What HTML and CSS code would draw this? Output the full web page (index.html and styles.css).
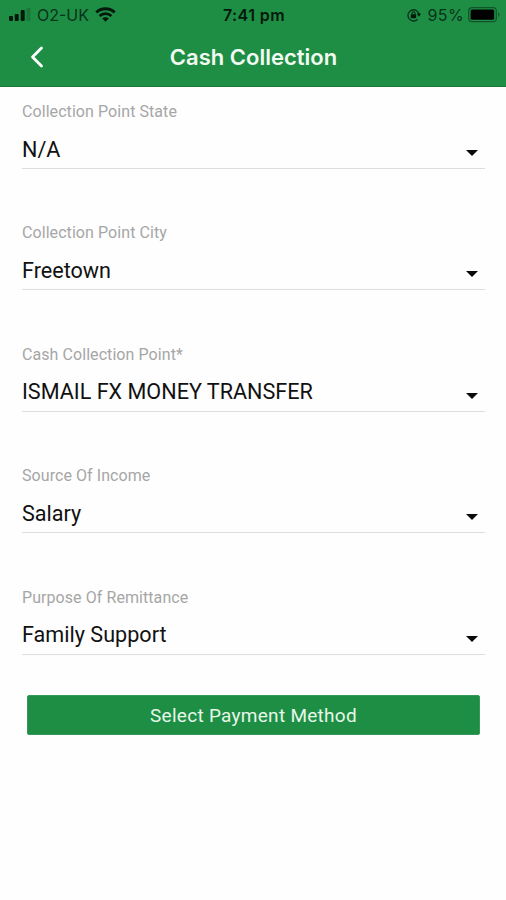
FILE: index.html
```html
<!DOCTYPE html>
<html lang="en">
<head>
    <meta charset="UTF-8">
    <meta name="viewport" content="width=device-width, initial-scale=1.0">
    <title>Cash Collection</title>
    <link rel="stylesheet" href="styles.css">
</head>
<body>
    <header class="header">
        <div class="status">
            <div class="status-left">
                <svg class="signal" width="22" height="13" viewBox="0 0 22 13">
                    <rect x="0" y="8" width="4" height="5" rx="1"/>
                    <rect x="5.7" y="6" width="4" height="7" rx="1"/>
                    <rect x="11.7" y="2" width="4" height="11" rx="1"/>
                    <rect x="17.5" y="0" width="4" height="13" rx="1" opacity="0.18"/>
                </svg>
                <span class="carrier">O2-UK</span>
                <svg class="wifi" width="21" height="15" viewBox="0 0 21 15">
                    <path d="M1.3 5.4C6.5 .6 14.5 .6 19.7 5.4" fill="none" stroke="#04180b" stroke-width="2.9"/>
                    <path d="M4.6 9C8 5.8 13 5.8 16.4 9" fill="none" stroke="#04180b" stroke-width="2.7"/>
                    <path d="M7.2 11.6C9.2 9.8 11.8 9.8 13.8 11.6L10.5 14.8Z"/>
                </svg>
            </div>
            <span class="time">7:41 pm</span>
            <div class="status-right">
                <svg class="lock" width="14" height="14" viewBox="0 0 14 14">
                    <path d="M10.6 11.3A5.6 5.6 0 1 1 12 6" fill="none" stroke="#07321a" stroke-width="1.3"/>
                    <path d="M9.8 5.5H14L12 8.8Z"/>
                    <rect x="3.8" y="6.3" width="5.4" height="3.9" rx=".6"/>
                    <path d="M5 6.5V5.2a1.5 1.5 0 0 1 3 0V6.5" fill="none" stroke="#04180b"/>
                </svg>
                <span class="percent">95%</span>
                <svg class="battery" width="33" height="16" viewBox="0 0 33 16">
                    <rect x=".7" y=".7" width="27.6" height="14" rx="3.5" fill="none" stroke="#0f5529" stroke-width="1.2"/>
                    <rect x="2.6" y="2.6" width="23.6" height="10.2" rx="1.5" fill="#000"/>
                    <path d="M30 5.5c2 .6 2 3.8 0 4.4Z" opacity="0.4"/>
                </svg>
            </div>
        </div>
        <div class="nav">
            <svg class="back" width="14" height="22" viewBox="0 0 14 22">
                <path d="M11.5 2L2.5 11L11.5 20" fill="none" stroke="#fff" stroke-width="2.8" stroke-linecap="round" stroke-linejoin="round"/>
            </svg>
            <h1 class="title">Cash Collection</h1>
        </div>
    </header>

    <main class="form">
        <div class="field">
            <div class="label">Collection Point State</div>
            <div class="select"><span class="value">N/A</span><span class="arrow"></span></div>
        </div>
        <div class="field">
            <div class="label">Collection Point City</div>
            <div class="select"><span class="value">Freetown</span><span class="arrow"></span></div>
        </div>
        <div class="field">
            <div class="label">Cash Collection Point*</div>
            <div class="select"><span class="value">ISMAIL FX MONEY TRANSFER</span><span class="arrow"></span></div>
        </div>
        <div class="field">
            <div class="label">Source Of Income</div>
            <div class="select"><span class="value">Salary</span><span class="arrow"></span></div>
        </div>
        <div class="field">
            <div class="label">Purpose Of Remittance</div>
            <div class="select"><span class="value">Family Support</span><span class="arrow"></span></div>
        </div>
        <button class="submit" type="button">Select Payment Method</button>
    </main>
</body>
</html>
```
FILE: styles.css
```css
* {
    box-sizing: border-box;
}

body {
    margin: 0;
    min-height: 900px;
    background-color: #fefefe;
    font-family: Roboto, "Liberation Sans", sans-serif;
}

.header {
    height: 87px;
    background-color: #1f8e45;
    border-bottom: 1px solid #187a38;
}

.status {
    display: grid;
    grid-template-columns: 1fr auto 1fr;
    align-items: center;
    height: 29px;
    padding: 0 5px 0 7px;
    font-family: Inter, "Liberation Sans", sans-serif;
    font-size: 16px;
    color: #07321a;
    fill: #04180b;
}

.status-left,
.status-right {
    display: flex;
    align-items: center;
}

.status-left {
    padding-left: 2px;
}

.status-right {
    justify-content: flex-end;
}

.carrier {
    margin-left: 6px;
}

.wifi {
    margin-left: 6px;
}

.time {
    font-size: 16px;
    font-weight: 600;
    letter-spacing: 0.4px;
    line-height: 20px;
    color: #04180b;
}

.percent {
    margin: 0 4px 0 6px;
    letter-spacing: 0.4px;
}

.nav {
    display: grid;
    grid-template-columns: 60px 1fr 60px;
    align-items: center;
    height: 55px;
}

.back {
    margin-left: 30px;
}

.title {
    margin: 0;
    padding-left: 1px;
    text-align: center;
    font-family: Inter, "Liberation Sans", sans-serif;
    font-size: 22px;
    font-weight: 600;
    color: #f1fbf1;
}

.form {
    display: flex;
    flex-direction: column;
    padding: 14px 21px 0 22px;
}

.field {
    height: 121.4px;
}

.label {
    height: 20px;
    line-height: 21px;
    font-size: 16px;
    letter-spacing: 0.07px;
    color: #a6a6a6;
}

.select {
    display: flex;
    align-items: center;
    justify-content: space-between;
    height: 48px;
    padding: 10px 7px 0 0;
    border-bottom: 1px solid #dedede;
}

.value {
    font-size: 21.6px;
    line-height: 26px;
    color: #111;
}

.arrow {
    margin-top: 7px;
    border-left: 6px solid transparent;
    border-right: 6px solid transparent;
    border-top: 6px solid #0a0a0a;
}

.submit {
    height: 40px;
    margin: -13px 5px 0;
    padding: 1px 0 0;
    border: 1px solid #35995a;
    border-radius: 2px;
    background-color: #1f8e45;
    font-family: Roboto, "Liberation Sans", sans-serif;
    font-size: 19px;
    letter-spacing: 0.28px;
    color: #e6f8e8;
}
```
